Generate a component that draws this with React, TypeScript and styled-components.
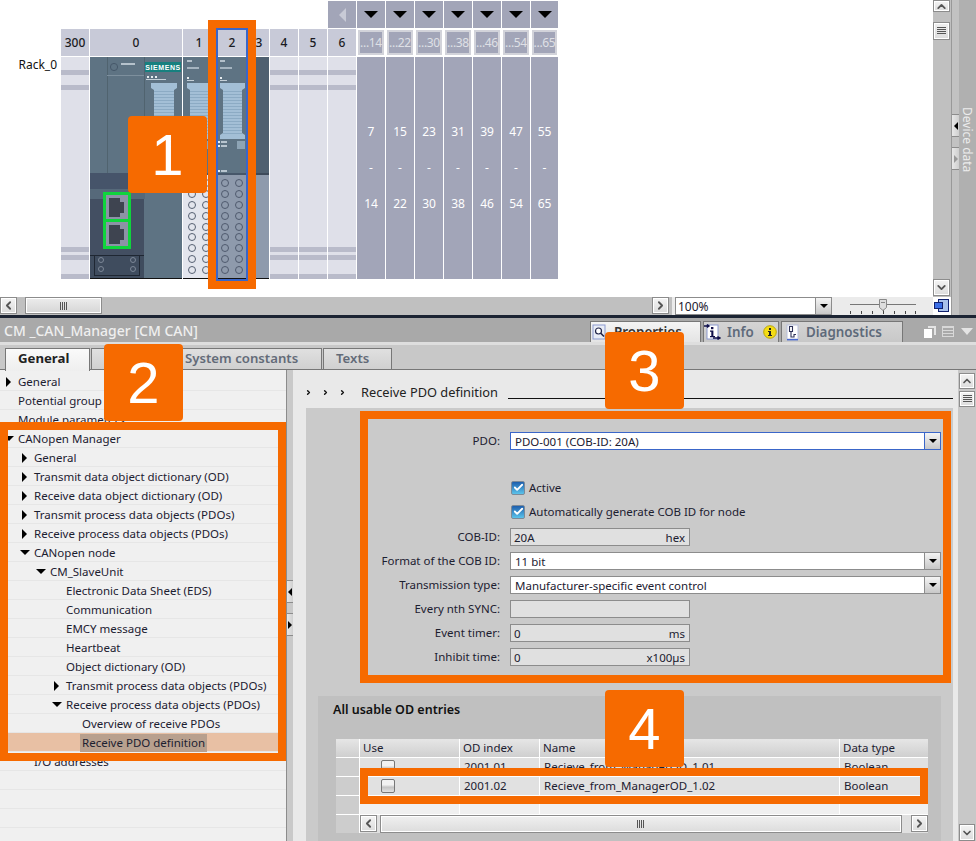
import React from "react";
import styled, { createGlobalStyle } from "styled-components";
import { ChevronDown, ChevronLeft, ChevronRight, ChevronUp, Check } from "lucide-react";

const GlobalStyle = createGlobalStyle`
  html, body { margin: 0; padding: 0; background: #fff; }
  * { box-sizing: border-box; }
`;

const slots = [
  { label: "300", kind: "empty" },
  { label: "0", kind: "cpu" },
  { label: "1", kind: "light" },
  { label: "2", kind: "dark" },
  { label: "3", kind: "blank" },
  { label: "4", kind: "empty" },
  { label: "5", kind: "empty" },
  { label: "6", kind: "empty" },
];
const groups = [
  ["...14", "7", "14"],
  ["...22", "15", "22"],
  ["...30", "23", "30"],
  ["...38", "31", "38"],
  ["...46", "39", "46"],
  ["...54", "47", "54"],
  ["...65", "55", "65"],
];

const tree: { label: string; level: number; arrow?: "right" | "down"; selected?: boolean }[] = [
  { label: "General", level: 0, arrow: "right" },
  { label: "Potential group", level: 0 },
  { label: "Module parameters", level: 0 },
  { label: "CANopen Manager", level: 0, arrow: "down" },
  { label: "General", level: 1, arrow: "right" },
  { label: "Transmit data object dictionary (OD)", level: 1, arrow: "right" },
  { label: "Receive data object dictionary (OD)", level: 1, arrow: "right" },
  { label: "Transmit process data objects (PDOs)", level: 1, arrow: "right" },
  { label: "Receive process data objects (PDOs)", level: 1, arrow: "right" },
  { label: "CANopen node", level: 1, arrow: "down" },
  { label: "CM_SlaveUnit", level: 2, arrow: "down" },
  { label: "Electronic Data Sheet (EDS)", level: 3 },
  { label: "Communication", level: 3 },
  { label: "EMCY message", level: 3 },
  { label: "Heartbeat", level: 3 },
  { label: "Object dictionary (OD)", level: 3 },
  { label: "Transmit process data objects (PDOs)", level: 3, arrow: "right" },
  { label: "Receive process data objects (PDOs)", level: 3, arrow: "down" },
  { label: "Overview of receive PDOs", level: 4 },
  { label: "Receive PDO definition", level: 4, selected: true },
  { label: "I/O addresses", level: 1 },
  { label: "", level: 0 },
  { label: "", level: 0 },
  { label: "", level: 0 },
  { label: "", level: 0 },
];

const terminalRows = [126, 137, 148, 159, 170, 180, 191, 202, 213];

const ModuleArt = ({ light }: { light?: boolean }) => (
  <svg width="32" height="222" viewBox="0 0 32 222">
    <rect width="32" height="222" fill="#5e7383" />
    <rect x="4" y="3" width="5" height="2" fill="#b3c0ca" />
    <rect x="4" y="10" width="12" height="2" fill="#a5b4c0" />
    <rect x="4" y="20" width="2" height="2" fill="#e8edf0" />
    <rect x="4" y="23" width="7" height="1" fill="#c5d0d8" />
    <path d="M4 26h25v5l-3 2v43l3 2v4H4v-4l3-2V33l-3-2z" fill="#a3bfd6" />
    {Array.from({ length: 15 }).map((_, i) => (
      <rect key={i} x="7" y={34 + i * 3} width="19" height="1" fill="#8cabc4" />
    ))}
    <rect x="1" y="84" width="3" height="2" fill="#e8edf0" />
    <rect x="5" y="84" width="6" height="2" fill="#b8c5cf" />
    <rect x="1" y="88" width="3" height="2" fill="#e8edf0" />
    <rect x="5" y="88" width="6" height="2" fill="#b8c5cf" />
    <rect x="21" y="84" width="8" height="8" fill="#8da4b5" />
    <rect x="1" y="113" width="3" height="2" fill="#e8edf0" />
    <rect x="5" y="113" width="6" height="2" fill="#b8c5cf" />
    <rect y="116" width="32" height="2" fill="#47576a" />
    <rect y="118" width="32" height="104" fill={light ? "#e3e5ed" : "#8e9aac"} />
    {terminalRows.map((y) => (
      <g key={y} fill="none" stroke={light ? "#566072" : "#4f5a6e"} strokeWidth="1">
        <circle cx="9" cy={y} r="3.5" />
        <circle cx="23" cy={y} r="3.5" />
      </g>
    ))}
    <rect y="221" width="32" height="1" fill="#111" />
  </svg>
);

const jack = "M19 0h11v4h4v11h-4v4H19z";

const CpuArt = () => (
  <svg width="92" height="222" viewBox="0 0 92 222">
    <rect width="92" height="222" fill="#5e7383" />
    <rect x="17" width="1" height="116" fill="#50636f" />
    <rect x="54" width="1" height="116" fill="#50636f" />
    <rect x="17" y="18" width="37" height="1" fill="#7d8f9d" />
    <circle cx="24" cy="10" r="3.6" fill="none" stroke="#46586a" />
    <rect x="31" y="6" width="14" height="2" fill="#b5c2cc" />
    <rect x="55" y="5" width="36" height="10" fill="#17807f" />
    <text x="73" y="12.6" textAnchor="middle" fontFamily="Liberation Sans, sans-serif" fontSize="7" fontWeight="700" letterSpacing=".6" fill="#fff">
      SIEMENS
    </text>
    {[57, 61, 65].map((x) => (
      <rect key={x} x={x} y="19" width="2" height="2" fill="#e8edf0" />
    ))}
    <rect x="56" y="22" width="20" height="1" fill="#c5d0d8" />
    <path d="M61 26h26v5l-3 2v43l3 2v4H61v-4l3-2V33l-3-2z" fill="#a3bfd6" />
    {Array.from({ length: 15 }).map((_, i) => (
      <rect key={i} x="64" y={34 + i * 3} width="20" height="1" fill="#8cabc4" />
    ))}
    <rect y="116" width="55" height="16" fill="#46546a" />
    <rect y="132" width="55" height="10" fill="#56697a" />
    <rect y="142" width="54" height="56" fill="#434f62" />
    <rect x="13" y="135" width="28" height="57" fill="#0fd43c" />
    <rect x="16" y="138" width="22" height="24" fill="#8c93a6" />
    <rect x="16" y="165" width="22" height="24" fill="#8c93a6" />
    <path d={jack} transform="translate(0 141)" fill="#3e4450" />
    <path d={jack} transform="translate(0 168)" fill="#3e4450" />
    <rect y="198" width="54" height="24" fill="#3f4c5e" />
    <rect y="198" width="54" height="1" fill="#1f2733" />
    <rect x="4.5" y="198.5" width="45" height="20" fill="none" stroke="#1f2733" />
    {[
      [11, 203],
      [43, 203],
      [11, 212],
      [43, 212],
    ].map(([x, y]) => (
      <circle key={`${x}-${y}`} cx={x} cy={y} r="2.5" fill="none" stroke="#7c8797" />
    ))}
    <rect y="221" width="92" height="1" fill="#111" />
  </svg>
);

const BlankArt = () => (
  <svg width="20" height="222" viewBox="0 0 20 222">
    <rect width="20" height="116" fill="#4f6070" />
    <rect y="116" width="20" height="2" fill="#3d4a5a" />
    <rect y="118" width="20" height="104" fill="#8e9aac" />
    <rect y="221" width="20" height="1" fill="#111" />
  </svg>
);

const PropIcon = () => (
  <svg width="15" height="16" viewBox="0 0 15 16">
    <rect x="1" y="1" width="12" height="14" fill="#e8ecf6" stroke="#8b9ad0" />
    <circle cx="6.5" cy="7" r="3" fill="#fff" stroke="#20244a" strokeWidth="1.2" />
    <path d="M8.8 9.3 12 12.5" stroke="#20244a" strokeWidth="1.6" />
  </svg>
);

const InfoIcon = () => (
  <svg width="17" height="18" viewBox="0 0 17 18">
    <rect x="3" y="2" width="11" height="14" fill="#fff" stroke="#8b9ad0" />
    <path d="M0 3h4M3 1.5 5 3 3 4.5M9 15h6M13.5 13.5 16 15l-2.5 1.5" fill="none" stroke="#10104a" strokeWidth="1.4" />
    <rect x="7" y="4" width="2.4" height="2.2" fill="#10104a" />
    <path d="M6 7.5h3.4v5.5H11v1.3H6V13h1.3V8.8H6z" fill="#10104a" />
  </svg>
);

const WarnDot = () => (
  <svg width="14" height="14" viewBox="0 0 14 14">
    <circle cx="7" cy="7" r="6.3" fill="#f4dc14" stroke="#b9a60c" />
    <rect x="6" y="3" width="2" height="2" fill="#222" />
    <path d="M5 6h3v4h1v1H5v-1h1V7H5z" fill="#222" />
  </svg>
);

const DiagIcon = () => (
  <svg width="13" height="17" viewBox="0 0 13 17">
    <rect x="1" y="1" width="11" height="14" fill="#fff" stroke="#b8c0dc" />
    <rect x="1" y="15" width="11" height="1.4" fill="#4a6ad0" />
    <path d="M3.5 2.5h3v5h-3zM5 7.5V13h3v-2.5h2" fill="none" stroke="#30345a" strokeWidth="1.1" />
  </svg>
);

const NavIcon = () => (
  <svg width="16" height="14" viewBox="0 0 16 14">
    <rect x="4.5" y=".5" width="10" height="12" fill="#a9c1ea" stroke="#10206e" />
    <rect x=".5" y="3.5" width="8" height="6" fill="#3a6ee6" stroke="#10206e" />
  </svg>
);

const ZoomSlider = () => (
  <svg width="68" height="18" viewBox="0 0 68 18">
    <rect x="1" y="7" width="66" height="1" fill="#777" />
    {[1, 12, 23, 34, 45, 56, 66].map((x) => (
      <rect key={x} x={x} y={x === 34 ? 12 : 14} width="1" height={x === 34 ? 5 : 3} fill="#444" />
    ))}
    <path d="M30.5 2.5h7v8l-3.5 3-3.5-3z" fill="#ddd" stroke="#888" />
    <rect x="32" y="5" width="4" height="1" fill="#888" />
  </svg>
);

const App = () => {
  return (
    <Page>
      <GlobalStyle />
      <Editor>
        <Canvas>
          <RackArea>
            <RackGrid>
              <TopSpacer />
              <TopButton>
                <BackTri />
              </TopButton>
              {groups.map((g) => (
                <TopButton key={g[0]}>
                  <DownTri />
                </TopButton>
              ))}
              <span />
              {slots.map((s) => (
                <SlotHead key={s.label}>{s.label}</SlotHead>
              ))}
              {groups.map((g) => (
                <GroupHead key={g[0]}>{g[0]}</GroupHead>
              ))}
              <RackName>Rack_0</RackName>
              {slots.map((s) => (
                <SlotBody key={s.label} $empty={s.kind === "empty"}>
                  {s.kind === "cpu" && <CpuArt />}
                  {s.kind === "light" && <ModuleArt light />}
                  {s.kind === "dark" && <ModuleArt />}
                  {s.kind === "blank" && <BlankArt />}
                </SlotBody>
              ))}
              {groups.map((g) => (
                <GroupBody key={g[0]}>
                  <span>{g[1]}</span>
                  <span>-</span>
                  <span>{g[2]}</span>
                </GroupBody>
              ))}
            </RackGrid>
          </RackArea>
          <BottomBar>
            <BarTrack>
              <BarLeft>
                <ScrollBtn $w={17} $h={17}>
                  <ChevronLeft size={13} strokeWidth={3.4} />
                </ScrollBtn>
                <BarThumb>
                  <GripV />
                </BarThumb>
              </BarLeft>
              <ScrollBtn $w={17} $h={17}>
                <ChevronRight size={13} strokeWidth={3.4} />
              </ScrollBtn>
            </BarTrack>
            <ZoomBox>
              <ZoomText>100%</ZoomText>
              <SelectBtn>
                <DownSmall />
              </SelectBtn>
            </ZoomBox>
            <SliderWrap>
              <ZoomSlider />
            </SliderWrap>
          </BottomBar>
        </Canvas>
        <VBar>
          <VTrack>
            <ScrollBtn $w={17} $h={12}>
              <ChevronUp size={13} strokeWidth={3.4} />
            </ScrollBtn>
            <VThumb>
              <GripH />
            </VThumb>
            <VSpacer />
            <ScrollBtn $w={17} $h={17}>
              <ChevronDown size={13} strokeWidth={3.4} />
            </ScrollBtn>
          </VTrack>
          <NavCorner>
            <NavIcon />
          </NavCorner>
        </VBar>
        <SplitCol>
          <SplitBtn>
            <Tri $dir="left" />
          </SplitBtn>
          <SplitBtn>
            <Tri $dir="right" $small $muted />
          </SplitBtn>
        </SplitCol>
        <SideTab>
          <SideLabel>Device data</SideLabel>
        </SideTab>
      </Editor>
      <DarkRule />
      <Inspector>
        <TitleBar>
          <Title>CM _CAN_Manager [CM CAN]</Title>
          <TopTabs>
            <TopTab $w={111} $active>
              <PropIcon />
              <span>Properties</span>
            </TopTab>
            <TopTab $w={76}>
              <InfoIcon />
              <span>Info</span>
              <WarnDot />
            </TopTab>
            <TopTab $w={122} $pad={4}>
              <DiagIcon />
              <span>Diagnostics</span>
            </TopTab>
          </TopTabs>
          <WindowTools>
            <WinCopy />
            <WinList />
            <WinArrow />
          </WindowTools>
        </TitleBar>
        <TabStrip>
          <PageTab $w={85} $active>General</PageTab>
          <PageTab $w={80} />
          <PageTab $w={150}>System constants</PageTab>
          <PageTab $w={69}>Texts</PageTab>
        </TabStrip>
        <InspectorBody>
          <TreePane>
            {tree.map((row, i) => (
              <TreeRow key={i} $level={row.level} $selected={row.selected}>
                {row.arrow && (
                  <ArrowSlot $dir={row.arrow}>
                    <Tri $dir={row.arrow} />
                  </ArrowSlot>
                )}
                <TreeLabel $selected={row.selected}>{row.label}</TreeLabel>
              </TreeRow>
            ))}
          </TreePane>
          <PaneSplit>
            <SplitBtn>
              <Tri $dir="left" />
            </SplitBtn>
            <SplitBtn>
              <Tri $dir="right" $small />
            </SplitBtn>
          </PaneSplit>
          <ContentPane>
            <Breadcrumb>
              <Crumbs>
                <ChevronRight size={7} strokeWidth={5} />
                <ChevronRight size={7} strokeWidth={5} />
                <ChevronRight size={7} strokeWidth={5} />
              </Crumbs>
              <CrumbText>Receive PDO definition</CrumbText>
              <CrumbRule />
            </Breadcrumb>
            <Content>
              <FormGrid>
                <FieldLabel>PDO:</FieldLabel>
                <SelectBox $focused>
                  <span>PDO-001 (COB-ID: 20A)</span>
                  <SelectBtn $focused>
                    <DownSmall />
                  </SelectBtn>
                </SelectBox>
                <FormGap />
                <CheckCell>
                  <CheckBox>
                    <Check size={11} strokeWidth={4} color="#fff" />
                  </CheckBox>
                  Active
                </CheckCell>
                <CheckCell>
                  <CheckBox>
                    <Check size={11} strokeWidth={4} color="#fff" />
                  </CheckBox>
                  Automatically generate COB ID for node
                </CheckCell>
                <FieldLabel>COB-ID:</FieldLabel>
                <ReadField>
                  <span>20A</span>
                  <span>hex</span>
                </ReadField>
                <FieldLabel>Format of the COB ID:</FieldLabel>
                <SelectBox>
                  <span>11 bit</span>
                  <SelectBtn>
                    <DownSmall />
                  </SelectBtn>
                </SelectBox>
                <FieldLabel>Transmission type:</FieldLabel>
                <SelectBox>
                  <span>Manufacturer-specific event control</span>
                  <SelectBtn>
                    <DownSmall />
                  </SelectBtn>
                </SelectBox>
                <FieldLabel>Every nth SYNC:</FieldLabel>
                <ReadField />
                <FieldLabel>Event timer:</FieldLabel>
                <ReadField>
                  <span>0</span>
                  <span>ms</span>
                </ReadField>
                <FieldLabel>Inhibit time:</FieldLabel>
                <ReadField>
                  <span>0</span>
                  <span>x100µs</span>
                </ReadField>
              </FormGrid>
              <EntriesPanel>
                <EntriesTitle>All usable OD entries</EntriesTitle>
                <EntriesTable>
                  <HeadCell />
                  <HeadCell>Use</HeadCell>
                  <HeadCell>OD index</HeadCell>
                  <HeadCell>Name</HeadCell>
                  <HeadCell>Data type</HeadCell>
                  <GutterCell />
                  <UseCell>
                    <EmptyCheck />
                  </UseCell>
                  <DataCell>2001.01</DataCell>
                  <DataCell>Recieve_from_ManagerOD_1.01</DataCell>
                  <DataCell>Boolean</DataCell>
                  <GutterCell />
                  <UseCell>
                    <EmptyCheck />
                  </UseCell>
                  <DataCell>2001.02</DataCell>
                  <DataCell>Recieve_from_ManagerOD_1.02</DataCell>
                  <DataCell>Boolean</DataCell>
                  <GutterCell />
                  <BlankCell />
                  <BlankCell />
                  <BlankCell />
                  <BlankCell />
                  <GutterCell />
                  <TableScroll>
                    <ScrollBtn $w={17} $h={17}>
                      <ChevronLeft size={13} strokeWidth={3.4} />
                    </ScrollBtn>
                    <TableThumb>
                      <GripV />
                    </TableThumb>
                    <ScrollBtn $w={17} $h={17}>
                      <ChevronRight size={13} strokeWidth={3.4} />
                    </ScrollBtn>
                  </TableScroll>
                </EntriesTable>
              </EntriesPanel>
            </Content>
          </ContentPane>
          <RightBar>
            <ScrollBtn $w={16} $h={16}>
              <ChevronUp size={12} strokeWidth={3.4} />
            </ScrollBtn>
            <ScrollBtn $w={16} $h={16}>
              <GripH />
            </ScrollBtn>
            <VSpacer />
            <ScrollBtn $w={16} $h={17}>
              <ChevronDown size={12} strokeWidth={3.4} />
            </ScrollBtn>
          </RightBar>
        </InspectorBody>
      </Inspector>

      <Highlight $x={208} $y={20} $w={48} $h={269}>
        <SlotFrame />
      </Highlight>
      <Highlight $x={0} $y={422} $w={286} $h={339} />
      <Highlight $x={360} $y={411} $w={591} $h={272} />
      <Highlight $x={360} $y={768} $w={568} $h={36} />
      <Callout $x={128} $y={116}>1</Callout>
      <Callout $x={104} $y={344}>2</Callout>
      <Callout $x={605} $y={332}>3</Callout>
      <Callout $x={605} $y={690}>4</Callout>
    </Page>
  );
};

export default App;

const uiFont = `"Noto Sans", "Open Sans", sans-serif`;

const Page = styled.div`
  position: relative;
  width: 976px;
  height: 841px;
  overflow: hidden;
  display: flex;
  flex-direction: column;
  font-family: ${uiFont};
  font-size: 11.5px;
  color: #1c2030;
  background: #fff;
`;

const Editor = styled.div`
  display: flex;
  height: 315px;
`;

const Canvas = styled.div`
  width: 933px;
  display: flex;
  flex-direction: column;
`;

const RackArea = styled.div`
  flex: 1;
  padding-top: 1px;
`;

const RackGrid = styled.div`
  display: grid;
  grid-template-columns: 60px 28px 92px 32px 32px 20px 28px 28px 28px repeat(6, 28px) 27px;
  grid-template-rows: 27px 27px 222px;
  gap: 1px;
`;

const TopSpacer = styled.div`
  grid-column: 1 / 9;
`;

const TopButton = styled.div`
  background: #a2a5b8;
  display: flex;
  align-items: center;
  justify-content: center;
`;

const DownTri = styled.span`
  width: 0;
  height: 0;
  border-left: 7px solid transparent;
  border-right: 7px solid transparent;
  border-top: 7px solid #000;
`;

const BackTri = styled.span`
  width: 0;
  height: 0;
  border-top: 7px solid transparent;
  border-bottom: 7px solid transparent;
  border-right: 7px solid #c8cad6;
`;

const SlotHead = styled.div`
  background: #c8cad8;
  display: flex;
  align-items: center;
  justify-content: center;
  font-size: 12px;
  font-weight: 500;
  color: #1a1a22;
`;

const GroupHead = styled.div`
  background: #a2a5b8;
  display: flex;
  align-items: center;
  justify-content: center;
  border: 2px solid #d2d3da;
  margin: 1px;
  font-size: 12px;
  letter-spacing: -0.3px;
  color: #dfe0e6;
  white-space: nowrap;
`;

const RackName = styled.div`
  text-align: right;
  padding: 0 3px 0 0;
  line-height: 16px;
  font-size: 12px;
  color: #111;
`;

const SlotBody = styled.div<{ $empty?: boolean }>`
  line-height: 0;
  background: ${(p) =>
    p.$empty
      ? `linear-gradient(to bottom,
          #dfe0e9 0 13px, #b9bbca 13px 18px, #dfe0e9 18px 28px, #b9bbca 28px 33px,
          #dfe0e9 33px 190px, #b9bbca 190px 195px, #dfe0e9 195px 198px, #b9bbca 198px 203px,
          #dfe0e9 203px 217px, #b9bbca 217px 222px)`
      : "transparent"};
`;

const GroupBody = styled.div`
  background: #a2a5b8;
  display: flex;
  flex-direction: column;
  align-items: center;
  justify-content: center;
  color: #fff;
  font-size: 12px;
  line-height: 36px;
`;

const BottomBar = styled.div`
  display: flex;
  height: 18px;
  background: #ebebeb;
`;

const BarTrack = styled.div`
  width: 672px;
  background: #c0c0c0;
  display: flex;
  justify-content: space-between;
  padding-right: 3px;
`;

const BarLeft = styled.div`
  display: flex;
  gap: 8px;
`;

const ScrollBtn = styled.div<{ $w: number; $h: number }>`
  width: ${(p) => p.$w}px;
  height: ${(p) => p.$h}px;
  flex: none;
  display: flex;
  align-items: center;
  justify-content: center;
  overflow: hidden;
  background: linear-gradient(#f4f4f4, #dcdcdc);
  border: 1px solid #8c8c8c;
  box-shadow: inset 0 0 0 1px #fff;
  color: #555;
`;

const BarThumb = styled.div`
  width: 77px;
  height: 17px;
  display: flex;
  align-items: center;
  justify-content: center;
  background: linear-gradient(#ececec, #d6d6d6);
  border: 1px solid #8c8c8c;
  box-shadow: inset 0 0 0 1px #fff;
`;

const GripV = styled.span`
  width: 8px;
  height: 8px;
  background: repeating-linear-gradient(to right, #555 0 1px, transparent 1px 2px);
`;

const GripH = styled.span`
  width: 9px;
  height: 8px;
  background: repeating-linear-gradient(to bottom, #555 0 1px, transparent 1px 2px);
`;

const ZoomBox = styled.div`
  width: 157px;
  height: 18px;
  margin-left: 3px;
  display: flex;
  align-items: center;
  justify-content: space-between;
  background: #fff;
  border: 1px solid #8c8c8c;
`;

const ZoomText = styled.span`
  padding-left: 2px;
  font-size: 12px;
`;

const SelectBtn = styled.div<{ $focused?: boolean }>`
  width: 16px;
  height: 100%;
  flex: none;
  display: flex;
  align-items: center;
  justify-content: center;
  background: linear-gradient(#f4f4f4, #c8c8c8);
  border-left: 1px solid ${(p) => (p.$focused ? "#3a66c9" : "#8c8c8c")};
`;

const DownSmall = styled.span`
  width: 0;
  height: 0;
  border-left: 4px solid transparent;
  border-right: 4px solid transparent;
  border-top: 4px solid #000;
`;

const SliderWrap = styled.div`
  margin-left: 17px;
`;

const VBar = styled.div`
  width: 19px;
  display: flex;
  flex-direction: column;
  border-right: 1px solid #999;
`;

const VTrack = styled.div`
  height: 297px;
  background: #c0c0c0;
  display: flex;
  flex-direction: column;
  gap: 10px;
  padding-bottom: 1px;
`;

const VThumb = styled.div`
  width: 17px;
  height: 18px;
  display: flex;
  align-items: center;
  justify-content: center;
  background: linear-gradient(#f0f0f0, #dcdcdc);
  border: 1px solid #8c8c8c;
  box-shadow: inset 0 0 0 1px #fff;
`;

const VSpacer = styled.div`
  flex: 1;
`;

const NavCorner = styled.div`
  flex: 1;
  display: flex;
  align-items: center;
  justify-content: center;
  background: #fff;
`;

const SplitCol = styled.div`
  width: 7px;
  background: #c2c2c2;
  display: flex;
  flex-direction: column;
  gap: 10px;
  padding-top: 114px;
`;

const SplitBtn = styled.div`
  width: 100%;
  height: 23px;
  display: flex;
  align-items: center;
  justify-content: center;
  background: linear-gradient(to right, #e8e8e8, #cfcfcf);
  border-top: 1px solid #8c8c8c;
  border-bottom: 1px solid #8c8c8c;
`;

const Tri = styled.span<{ $dir: "left" | "right" | "down"; $muted?: boolean; $small?: boolean }>`
  width: 0;
  height: 0;
  display: block;
  ${(p) => {
    const c = p.$muted ? "#999" : "#000";
    if (p.$dir === "left")
      return `border-top: 4px solid transparent; border-bottom: 4px solid transparent; border-right: 4px solid ${c};`;
    if (p.$dir === "right") {
      const s = p.$small ? 4 : 5;
      return `border-top: ${s}px solid transparent; border-bottom: ${s}px solid transparent; border-left: ${s}px solid ${c};`;
    }
    return `border-left: 5px solid transparent; border-right: 5px solid transparent; border-top: 5px solid ${c};`;
  }}
`;

const SideTab = styled.div`
  flex: 1;
  background: #b0b0b0;
  display: flex;
  justify-content: center;
  padding-top: 107px;
`;

const SideLabel = styled.span`
  writing-mode: vertical-rl;
  color: #ececec;
  font-size: 12px;
  line-height: 17px;
`;

const DarkRule = styled.div`
  height: 3px;
  background: #1c2433;
`;

const Inspector = styled.div`
  flex: 1;
  min-height: 0;
  display: flex;
  flex-direction: column;
`;

const TitleBar = styled.div`
  height: 24px;
  flex: none;
  display: flex;
  align-items: flex-end;
  justify-content: space-between;
  background: #a9a9a9;
`;

const Title = styled.div`
  align-self: center;
  padding-left: 4px;
  color: #efefef;
  font-size: 14px;
  font-weight: 500;
`;

const TopTabs = styled.div`
  margin-left: auto;
  display: flex;
  gap: 2px;
`;

const TopTab = styled.div<{ $w: number; $active?: boolean; $pad?: number }>`
  width: ${(p) => p.$w}px;
  height: 21px;
  padding-left: ${(p) => p.$pad ?? (p.$active ? 1 : 0)}px;
  display: flex;
  align-items: center;
  gap: ${(p) => (p.$active ? 7 : p.$pad ? 7 : 6)}px;
  font-size: 13.4px;
  font-weight: 600;
  color: ${(p) => (p.$active ? "#333" : "#5e6a7a")};
  background: ${(p) => (p.$active ? "linear-gradient(#f4f4f4, #e4e4e4)" : "linear-gradient(#d4d4d4, #c8c8c8)")};
  border: 1px solid #777;
  border-bottom: none;

  & > span + svg {
    margin-left: 3px;
  }
`;

const WindowTools = styled.div`
  width: 73px;
  height: 21px;
  padding-left: 21px;
  display: flex;
  align-items: center;
  gap: 6px;
`;

const WinCopy = styled.span`
  width: 12px;
  height: 12px;
  background: linear-gradient(#fff, #fff) 0 3px / 8px 9px no-repeat,
    linear-gradient(to right, #e4e4e4, #e4e4e4) 4px 0 / 8px 2px no-repeat,
    linear-gradient(#e4e4e4, #e4e4e4) 10px 0 / 2px 9px no-repeat;
`;

const WinList = styled.span`
  width: 12px;
  height: 11px;
  border: 1px solid #d8d8d8;
  background: repeating-linear-gradient(to bottom, #d8d8d8 0 1px, transparent 1px 3px);
`;

const WinArrow = styled.span`
  margin-left: 1px;
  width: 0;
  height: 0;
  border-left: 6px solid transparent;
  border-right: 6px solid transparent;
  border-top: 7px solid #e4e4e4;
`;

const TabStrip = styled.div`
  height: 28px;
  flex: none;
  padding: 3px 0 0 5px;
  display: flex;
  gap: 1px;
  background: #c8c8c8;
  border-top: 3px solid #dedede;
  border-bottom: 1px solid #777;
`;

const PageTab = styled.div<{ $w: number; $active?: boolean }>`
  width: ${(p) => p.$w}px;
  height: ${(p) => (p.$active ? "23px" : "21px")};
  padding: 0 0 ${(p) => (p.$active ? 4 : 2)}px 12px;
  display: flex;
  align-items: center;
  position: relative;
  z-index: ${(p) => (p.$active ? 1 : 0)};
  font-size: 13.2px;
  font-weight: ${(p) => (p.$active ? 700 : 600)};
  color: ${(p) => (p.$active ? "#222" : "#636b78")};
  background: ${(p) => (p.$active ? "linear-gradient(#fafafa, #eeeeee)" : "linear-gradient(#e0e0e0, #d0d0d0)")};
  border: 1px solid #777;
  border-bottom: none;
`;

const InspectorBody = styled.div`
  flex: 1;
  min-height: 0;
  display: flex;
  overflow: hidden;
`;

const TreePane = styled.div`
  width: 287px;
  flex: none;
  padding-top: 2px;
  background: #f0f0f0;
  border-right: 1px solid #8c8c8c;
`;

const TreeRow = styled.div<{ $level: number; $selected?: boolean }>`
  position: relative;
  height: 19px;
  padding: 1px 0 0 ${(p) => 18 + p.$level * 16}px;
  display: flex;
  align-items: center;
  white-space: nowrap;
  background: ${(p) => (p.$selected ? "#e8c0a4" : "transparent")};
  border-bottom: 1px solid #e6e6e6;
`;

const ArrowSlot = styled.span<{ $dir: "right" | "down" }>`
  position: absolute;
  margin-left: ${(p) => (p.$dir === "down" ? -14 : -12)}px;
`;

const TreeLabel = styled.span<{ $selected?: boolean }>`
  padding: 0 2px;
  margin-left: -2px;
  line-height: 18px;
  background: ${(p) => (p.$selected ? "#b8a08e" : "transparent")};
`;

const PaneSplit = styled.div`
  width: 6px;
  flex: none;
  background: #c9c9c9;
  display: flex;
  flex-direction: column;
  gap: 10px;
  padding-top: 210px;
`;

const ContentPane = styled.div`
  width: 665px;
  flex: none;
  display: flex;
  flex-direction: column;
  background: #e9e9e9;
`;

const Breadcrumb = styled.div`
  height: 38px;
  flex: none;
  padding: 6px 5px 0 12px;
  display: flex;
  align-items: center;
  color: #222;
`;

const Crumbs = styled.div`
  display: flex;
  gap: 10px;
  color: #111;
`;

const CrumbText = styled.span`
  margin-left: 15px;
  font-size: 12.8px;
  white-space: nowrap;
`;

const CrumbRule = styled.div`
  flex: 1;
  align-self: flex-end;
  margin: 0 0 9px 10px;
  height: 1px;
  background: #111;
`;

const Content = styled.div`
  flex: 1;
  min-height: 0;
  margin: 0 5px 0 13px;
  background: #cacaca;
`;

const FormGrid = styled.div`
  display: grid;
  grid-template-columns: 194px 431px;
  grid-auto-rows: 18px;
  gap: 6px 10px;
  padding-top: 24px;
`;

const FormGap = styled.div`
  grid-column: 1 / -1;
`;

const FieldLabel = styled.div`
  text-align: right;
  line-height: 18px;
  white-space: nowrap;
`;

const SelectBox = styled.div<{ $focused?: boolean }>`
  display: flex;
  align-items: center;
  justify-content: space-between;
  padding-left: 4px;
  background: #fff;
  border: 1px solid ${(p) => (p.$focused ? "#3a66c9" : "#8c8c8c")};
`;

const ReadField = styled.div`
  width: 180px;
  grid-column: 2;
  padding: 0 4px 0 3px;
  display: flex;
  align-items: center;
  justify-content: space-between;
  background: #e0e0e0;
  border: 1px solid #8c8c8c;
`;

const CheckCell = styled.div`
  grid-column: 2;
  padding: 0 0 3px 1px;
  display: flex;
  align-items: center;
  gap: 4px;
  white-space: nowrap;
`;

const CheckBox = styled.span`
  width: 14px;
  height: 14px;
  display: flex;
  align-items: center;
  justify-content: center;
  border: 1px solid #7c8a98;
  border-radius: 2px;
  background: linear-gradient(#1d5ead, #5cc3ea);
`;

const EntriesPanel = styled.div`
  margin: 30px 12px 0;
  padding: 5px 13px 0 18px;
  background: #c0c0c0;
  height: 200px;
`;

const EntriesTitle = styled.div`
  height: 38px;
  margin-left: -3px;
  font-size: 12.5px;
  font-weight: 600;
  color: #111;
`;

const EntriesTable = styled.div`
  display: grid;
  grid-template-columns: 23px 99px 79px 299px 1fr;
  grid-template-rows: repeat(5, 18px);
  gap: 1px;
  background: #fff;
`;

const HeadCell = styled.div`
  padding: 0 0 2px 3px;
  display: flex;
  align-items: center;
  background: linear-gradient(#e6e6e6, #cfcfcf);
`;

const GutterCell = styled.div`
  background: #cdcdcd;
`;

const DataCell = styled.div`
  padding: 0 0 2px 4px;
  display: flex;
  align-items: center;
  background: #e1e1e1;
`;

const UseCell = styled(DataCell)`
  padding: 0 0 0 21px;
`;

const BlankCell = styled.div`
  background: #f0f0f0;
`;

const EmptyCheck = styled.span`
  width: 14px;
  height: 14px;
  border: 1px solid #777;
  border-radius: 2px;
  background: linear-gradient(#f2f2f2 0 40%, #c4c4c4 60%, #e2e2e2);
`;

const TableScroll = styled.div`
  grid-column: 2 / -1;
  display: flex;
  gap: 2px;
  background: #e0e0e0;
  justify-content: space-between;
`;

const TableThumb = styled.div`
  flex: 1;
  margin: 0 7px 0 1px;
  display: flex;
  align-items: center;
  justify-content: center;
  background: linear-gradient(#f0f0f0, #dcdcdc);
  border: 1px solid #8c8c8c;
  box-shadow: inset 0 0 0 1px #fff;
`;

const RightBar = styled.div`
  flex: 1;
  padding: 3px 1px 0;
  display: flex;
  flex-direction: column;
  gap: 2px;
  background: #c8c8c8;
`;

const Highlight = styled.div<{ $x: number; $y: number; $w: number; $h: number }>`
  position: absolute;
  left: ${(p) => p.$x}px;
  top: ${(p) => p.$y}px;
  width: ${(p) => p.$w}px;
  height: ${(p) => p.$h}px;
  border: 8px solid #f66a00;
`;

const SlotFrame = styled.div`
  width: 100%;
  height: 100%;
  border: 2px solid #3a66c9;
`;

const Callout = styled.div<{ $x: number; $y: number }>`
  position: absolute;
  left: ${(p) => p.$x}px;
  top: ${(p) => p.$y}px;
  width: 79px;
  height: 77px;
  display: flex;
  align-items: center;
  justify-content: center;
  border-radius: 4px;
  background: #f66a00;
  color: #fff;
  font-family: "Liberation Sans", Arial, sans-serif;
  font-size: 58px;
  line-height: 1;
`;
